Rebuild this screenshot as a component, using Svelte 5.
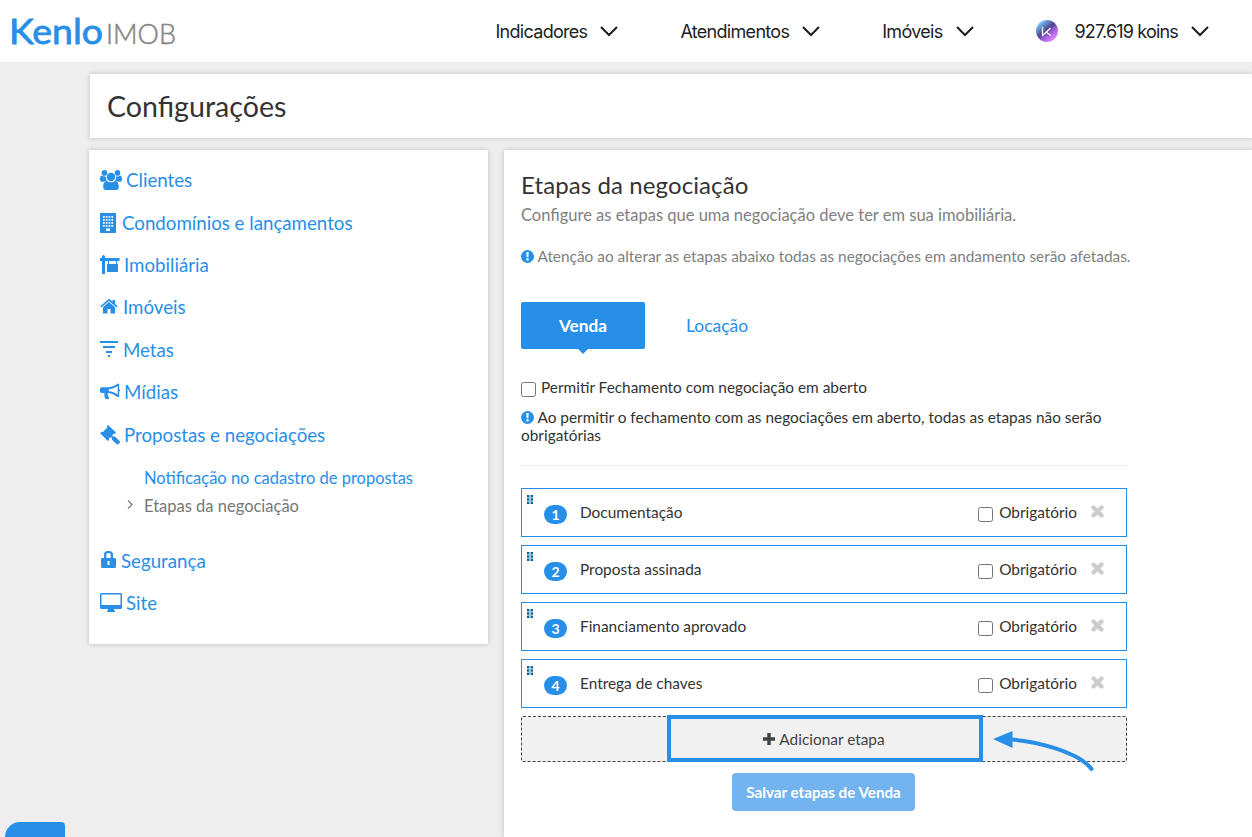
<script lang="ts">
    const nav = [
        { label: 'Indicadores' },
        { label: 'Atendimentos' },
        { label: 'Imóveis' },
        { label: '927.619 koins', coin: true }
    ];

    const menu = [
        { icon: 'users', width: 22, label: 'Clientes' },
        { icon: 'building', width: 18, label: 'Condomínios e lançamentos' },
        { icon: 'sign', width: 20, label: 'Imobiliária' },
        { icon: 'home', width: 19, label: 'Imóveis' },
        { icon: 'filter', width: 19, label: 'Metas' },
        { icon: 'horn', width: 20, label: 'Mídias' },
        { icon: 'gavel', width: 20, label: 'Propostas e negociações', children: ['Notificação no cadastro de propostas', 'Etapas da negociação'] },
        { icon: 'lock', width: 17, label: 'Segurança' },
        { icon: 'screen', width: 22, label: 'Site' }
    ];

    const tabs = ['Venda', 'Locação'];
    let activeTab = $state('Venda');
    let activeChild = $state('Etapas da negociação');
    let allowClose = $state(false);

    let steps = $state([
        { name: 'Documentação', required: false },
        { name: 'Proposta assinada', required: false },
        { name: 'Financiamento aprovado', required: false },
        { name: 'Entrega de chaves', required: false }
    ]);

    function addStep() {
        steps.push({ name: 'Nova etapa', required: false });
    }

    function removeStep(i: number) {
        steps.splice(i, 1);
    }
</script>

{#snippet warn()}
    <svg class="warn" width="13" height="13" viewBox="0 0 13 13">
        <circle cx="6.5" cy="6.5" r="6.5" />
        <path fill="#fff" d="M5.3 2h2.4l-.3 5.2H5.6zM5.4 8.3h2.2v2.2H5.4z" />
    </svg>
{/snippet}

{#snippet menuIcon(name: string)}
    {#if name === 'users'}
        <circle cx="11" cy="7" r="4.2" />
        <circle cx="4.5" cy="2.9" r="2.8" />
        <circle cx="17.5" cy="2.9" r="2.8" />
        <path d="M3.2 17c0-3.600 1.200-6 3.800-6 2.400 1.800 5.600 1.800 8 0 2.600 0 3.800 2.400 3.800 6 0 2-1 3-2.600 3H5.800c-1.600 0-2.600-1-2.600-3z" />
        <path d="M0 9.200C0 7 .6 5.600 1.900 5.600c1.300.9 2.700 1.100 4 .6-.2 2 .2 3.400 1.200 4.600-1.300 0-2.300.3-3 1H2C.7 11.800 0 10.700 0 9.200z" />
        <path d="M22 9.200c0-2.200-.6-3.600-1.900-3.600-1.300.9-2.700 1.100-4 .6.2 2-.2 3.400-1.200 4.600 1.300 0 2.300.3 3 1H20c1.300 0 2-1.100 2-2.600z" />
    {:else if name === 'building'}
        <path fill-rule="evenodd" d="M0 0h16v20H0zM3 3v1.700h1.700V3zm2.800 0v1.700h1.700V3zm2.800 0v1.700h1.700V3zm2.800 0v1.700h1.700V3zM3 6v1.700h1.700V6zm2.800 0v1.700h1.700V6zm2.800 0v1.700h1.700V6zm2.800 0v1.700h1.700V6zM3 9v1.700h1.700V9zm2.800 0v1.700h1.700V9zm2.800 0v1.700h1.700V9zm2.800 0v1.700h1.700V9zM3 12v1.700h1.700V12zm2.800 0v1.700h1.700V12zm2.800 0v1.700h1.700V12zm2.800 0v1.700h1.700V12zM6 15.500V18h4v-2.500z" />
    {:else if name === 'sign'}
        <path d="M2 1.500C2 .8 3 0 3.500 0S5 .8 5 1.500V3h14.500v3H5v13H2V6H0V3h2zM8 6h1v3h7V6h1v3h1v8H7V9h1z" />
    {:else if name === 'home'}
        <path d="M8.300 2.300 .3 9.300 1.300 10.500 9 3.900 16.700 10.500 17.700 9.300 15 6.900V3h-2.500v1.800L9.700 2.300c-.5-.4-1-.4-1.400 0z" />
        <path d="M9 5.100l6 5.200v6.200h-4.500V12h-3v4.500H3v-6.200z" />
    {:else if name === 'filter'}
        <path d="M0 1h18v2H0zM3 6h12v2H3zM6 11h6v2H6zM8 15h2v2H8z" />
    {:else if name === 'horn'}
        <path fill-rule="evenodd" d="M18 1.500c.8 0 1.200.5 1.200 1.200V7c.6.2.8.7.8 1.300s-.3 1-.8 1.200V14c0 .8-.6 1.200-1.300 1.200-3-2.400-6.300-4-9.900-4.300-.8.8-.6 1.600.2 2.300-.5 1 .2 1.900 1.300 2.700-.8 1.600-3.200 1.500-4.300.7-.6-2-1.200-3.900-.7-5.700H1.700C.7 10.900 0 10.200 0 9.200V7c0-1 .7-1.700 1.700-1.700h5.500C11 5.300 15 3.800 18 1.500zM17.700 4c-2.800 2-5.800 3-8.800 3.300v2c3 .3 6 1.300 8.800 3.200z" />
    {:else if name === 'gavel'}
        <path d="M8 0 16 7.500 14.800 9l-1-.4-1.600 1.800 1.300 1.300c.8-.4 1.400-.2 2 .4l4 3.800c.7.700.7 1.500 0 2.200l-1 1c-.7.6-1.500.6-2.200 0l-4-4c-.6-.6-.7-1.300-.3-2L10.700 12l-1.900 1.600.4 1.100L7.800 16 .2 8.200l1.300-1.400 1.200.5 4.600-4.700L6.800 1.300z" />
    {:else if name === 'lock'}
        <path fill-rule="evenodd" d="M4 7V3.500C4 1.400 5.600 0 7.500 0h2C11.400 0 13 1.400 13 3.500V7h1.500c.9 0 1.500.6 1.500 1.500v7c0 .9-.6 1.500-1.500 1.500h-12c-.9 0-1.500-.6-1.500-1.500v-7C1 7.600 1.600 7 2.500 7zm2.300 0h4.400V3.700c0-.8-.5-1.400-1.400-1.400H7.700c-.9 0-1.400.6-1.400 1.400zM7.500 10v4h2v-4z" />
    {:else}
        <path fill-rule="evenodd" d="M1.500 0h19c.9 0 1.500.6 1.500 1.500v13c0 .9-.6 1.500-1.500 1.500H14v1l1 1v1H7v-1l1-1v-1H1.500C.6 16 0 15.400 0 14.500v-13C0 .6.6 0 1.500 0zm0 1.500V12h19V1.500z" />
    {/if}
{/snippet}

<header>
    <svg class="logo" width="174" height="54" viewBox="0 0 174 54">
        <text class="kenlo" x="2" y="39.500" textLength="94" lengthAdjust="spacingAndGlyphs">Kenlo</text>
        <text class="imob" x="99" y="39.500" textLength="70" lengthAdjust="spacingAndGlyphs">IMOB</text>
    </svg>
    <nav>
        {#each nav as item}
            <a href="#menu" class:koins={item.coin}>
                {#if item.coin}
                    <svg class="coin" width="22" height="22" viewBox="0 0 22 22">
                        <defs>
                            <linearGradient id="coin" x1="0.15" y1="0.15" x2="0.8" y2="0.9">
                                <stop offset="0" stop-color="#7cc4ff" />
                                <stop offset="0.45" stop-color="#4a4387" />
                                <stop offset="0.65" stop-color="#9a5bd8" />
                                <stop offset="1" stop-color="#e58bff" />
                            </linearGradient>
                        </defs>
                        <circle cx="11" cy="11" r="11" fill="url(#coin)" />
                        <path d="M6.500 7v8.500L14.500 8M10 12l5 3.500" fill="none" stroke="#fff" stroke-width="1.300" />
                    </svg>
                {/if}
                <span>{item.label}</span>
                <svg class="chevron" width="18" height="11" viewBox="0 0 18 11">
                    <path d="M1 1l8 8 8-8" />
                </svg>
            </a>
        {/each}
    </nav>
</header>

<section class="page-title"><h1>Configurações</h1></section>

<div class="columns">
    <aside>
        {#each menu as item}
            <a class="item" href="#config">
                <svg width={item.width} height="20" viewBox="0 0 {item.width} 20">{@render menuIcon(item.icon)}</svg>
                <span>{item.label}</span>
            </a>
            {#if item.children}
                <ul>
                    {#each item.children as child}
                        <li class:current={child === activeChild}>
                            <svg width="6" height="9" viewBox="0 0 6 9"><path d="M1 .5l4 4-4 4" /></svg>
                            <a href="#config" onclick={() => activeChild = child}>{child}</a>
                        </li>
                    {/each}
                </ul>
            {/if}
        {/each}
    </aside>

    <main>
        <h2>Etapas da negociação</h2>
        <p class="lead">Configure as etapas que uma negociação deve ter em sua imobiliária.</p>
        <p class="attention">{@render warn()} Atenção ao alterar as etapas abaixo todas as negociações em andamento serão afetadas.</p>

        <div class="tabs">
            {#each tabs as tab}
                <button class:active={tab === activeTab} onclick={() => activeTab = tab}>{tab}</button>
            {/each}
        </div>

        <label class="allow">
            <input type="checkbox" bind:checked={allowClose} />
            <span>Permitir Fechamento com negociação em aberto</span>
        </label>
        <p class="note">{@render warn()} Ao permitir o fechamento com as negociações em aberto, todas as etapas não serão obrigatórias</p>
        <hr />

        <div class="steps">
            {#each steps as step, i}
                <div class="step">
                    <svg class="grip" width="6" height="9" viewBox="0 0 6 9">
                        <path fill="#9cc3d6" d="M0 0h6v9H0z" />
                        <path d="M0 0h2v2H0zM4 0h2v2H4zM0 3.500h2v2H0zM4 3.500h2v2H4zM0 7h2v2H0zM4 7h2v2H4z" />
                    </svg>
                    <span class="badge">{i + 1}</span>
                    <span class="name">{step.name}</span>
                    <label>
                        <input type="checkbox" bind:checked={step.required} />
                        <span>Obrigatório</span>
                    </label>
                    <button class="remove" aria-label="Remover etapa" onclick={() => removeStep(i)}>
                        <svg width="13" height="13" viewBox="0 0 13 13"><path d="M2.500 2.500l8 8M10.500 2.500l-8 8" /></svg>
                    </button>
                </div>
            {/each}
        </div>

        <div class="add-row">
            <button class="add" onclick={addStep}>
                <svg width="12" height="12" viewBox="0 0 12 12"><path d="M4.300 0h3.400v4.300H12v3.400H7.700V12H4.300V7.700H0V4.300h4.300z" /></svg>
                <span>Adicionar etapa</span>
            </button>
            <div class="highlight"></div>
            <svg class="arrow" width="104" height="44" viewBox="0 0 104 44">
                <path class="head" d="M0 11 19.500 3v17z" />
                <path class="tail" d="M18 11.500C42 13 86 24 98.500 41" />
            </svg>
        </div>
        <button class="save">Salvar etapas de Venda</button>
    </main>
</div>

<div class="chat-tab"></div>

<style>
    :global(body) {
        margin: 0;
        height: 837px;
        overflow: hidden;
        background: #eee;
        color: #333;
        font: 15.4px/20px Lato, sans-serif;
    }

    a {
        color: #288fe8;
        text-decoration: none;
    }

    p, h1, h2, ul {
        margin: 0;
        padding: 0;
        font-weight: 400;
    }

    button {
        border: 0;
        padding: 0;
        background: none;
        font: inherit;
        color: inherit;
        cursor: pointer;
    }

    header {
        display: flex;
        align-items: center;
        justify-content: space-between;
        height: 62px;
        padding: 0 43px 0 7px;
        background: #fff;
    }

    .kenlo {
        font: 35px Lato, sans-serif;
        fill: #288fe8;
        stroke: #288fe8;
        stroke-width: .8;
        stroke-linejoin: round;
    }

    .imob {
        font: 300 27px Lato, sans-serif;
        fill: #868686;
        stroke: #868686;
        stroke-width: .5;
    }

    nav {
        display: flex;
        gap: 62px;
    }

    nav a {
        display: flex;
        align-items: center;
        gap: 13px;
        color: #1d1d1f;
        font: 18px/24px Inter, sans-serif;
        letter-spacing: -.7px;
    }

    nav span {
        padding-top: 2px;
    }

    .koins {
        letter-spacing: -.83px;
    }

    .coin {
        margin-right: 4px;
    }

    .chevron path {
        fill: none;
        stroke: #1d1d1f;
        stroke-width: 2;
    }

    .page-title {
        margin: 12px 0 12px 90px;
        padding: 16px 17px 18px;
        height: 30px;
        background: #fff;
        box-shadow: 0 0 5px rgba(0, 0, 0, .2);
    }

    h1 {
        font-size: 28.6px;
        line-height: 32px;
    }

    .columns {
        display: flex;
        align-items: flex-start;
        gap: 16px;
        padding-left: 89px;
    }

    aside {
        box-sizing: border-box;
        width: 399px;
        height: 494px;
        padding: 9px 11px;
        background: #fff;
        box-shadow: 0 0 5px rgba(0, 0, 0, .2);
    }

    .item {
        display: flex;
        align-items: center;
        gap: 4px;
        height: 42.4px;
        font-size: 18.7px;
    }

    .item svg {
        fill: #288fe8;
    }

    ul {
        list-style: none;
        padding: 8px 0 20px 27px;
    }

    li {
        display: flex;
        align-items: center;
        gap: 11px;
        height: 28px;
        font-size: 16.5px;
    }

    li svg {
        visibility: hidden;
        margin-top: -3px;
        fill: none;
        stroke: #777;
        stroke-width: 1.2;
    }

    .current svg {
        visibility: visible;
    }

    .current a {
        color: #777;
    }

    main {
        flex: 1;
        height: 667px;
        padding: 20px 0 0 17px;
        background: #fff;
        box-shadow: 0 0 5px rgba(0, 0, 0, .2);
    }

    h2 {
        font-size: 24px;
        line-height: 30px;
        letter-spacing: .1px;
    }

    .lead {
        color: #808080;
        font-size: 16.5px;
        line-height: 31px;
    }

    .attention {
        margin-top: 15px;
        color: #808080;
    }

    .warn {
        vertical-align: -1px;
        fill: #288fe8;
    }

    .tabs {
        display: flex;
        margin: 36px 0 29px;
    }

    .tabs button {
        position: relative;
        height: 47px;
        padding: 0 38px;
        border-radius: 2px;
        color: #288fe8;
        font-size: 17.5px;
    }

    .tabs button + button {
        padding-left: 41px;
    }

    .tabs .active {
        background: #288fe8;
        color: #fff;
        font-weight: 700;
        font-size: 17.2px;
    }

    .tabs .active::after {
        content: '';
        position: absolute;
        top: 100%;
        left: 50%;
        margin-left: -5px;
        border: 5px solid transparent;
        border-top-color: #288fe8;
        border-bottom: 0;
    }

    label {
        display: flex;
        align-items: center;
    }

    label span, .name {
        padding-bottom: 2px;
    }

    input {
        flex: none;
        width: 15px;
        height: 15px;
        margin: 3px 6px 0 0;
    }

    .allow {
        height: 20px;
    }

    .allow input {
        margin-right: 5px;
    }

    .note {
        width: 606px;
        margin-top: 10px;
        line-height: 18px;
    }

    hr {
        width: 606px;
        margin: 21px 0 22px;
        border: 0;
        border-top: 1px solid #eee;
    }

    .steps {
        display: flex;
        flex-direction: column;
        gap: 8px;
        width: 606px;
    }

    .step {
        box-sizing: border-box;
        display: flex;
        align-items: center;
        height: 49px;
        padding: 0 22px 0 5px;
        border: 1px solid #288fe8;
    }

    .grip {
        align-self: flex-start;
        margin: 6px 11px 0 0;
        fill: #00628f;
    }

    .badge {
        width: 23px;
        height: 19px;
        margin: 3px 13px 0 0;
        border-radius: 10px;
        background: #288fe8;
        color: #fff;
        font-size: 14px;
        font-weight: 700;
        line-height: 19px;
        text-align: center;
    }

    .name {
        flex: 1;
    }

    .remove {
        display: flex;
        margin: 0 0 3px 14px;
    }

    .remove path {
        fill: none;
        stroke: #ccc;
        stroke-width: 4.2;
        stroke-linecap: round;
    }

    .add-row {
        position: relative;
        box-sizing: border-box;
        width: 606px;
        height: 46px;
        margin-top: 8px;
        border: 1px dashed #444;
        border-radius: 2px;
        background: #f1f1f1;
    }

    .add {
        display: flex;
        align-items: center;
        justify-content: center;
        gap: 4px;
        width: 100%;
        height: 100%;
        color: #444;
    }

    .add svg {
        fill: #444;
    }

    .highlight {
        position: absolute;
        top: -2px;
        left: 145px;
        width: 308px;
        height: 39px;
        border: 4px solid #288fe8;
        pointer-events: none;
    }

    .arrow {
        position: absolute;
        top: 11px;
        left: 471px;
        pointer-events: none;
    }

    .head {
        fill: #288fe8;
    }

    .tail {
        fill: none;
        stroke: #288fe8;
        stroke-width: 4;
        stroke-linecap: round;
    }

    .save {
        display: block;
        width: 183px;
        height: 38px;
        margin: 11px 0 0 211px;
        border-radius: 4px;
        background: #73b3f0;
        color: #fff;
        font-size: 15.2px;
        font-weight: 700;
    }

    .chat-tab {
        position: fixed;
        left: 5px;
        bottom: 0;
        width: 60px;
        height: 15px;
        border-radius: 26px 7px 0 0;
        background: #288fe8;
    }
</style>
